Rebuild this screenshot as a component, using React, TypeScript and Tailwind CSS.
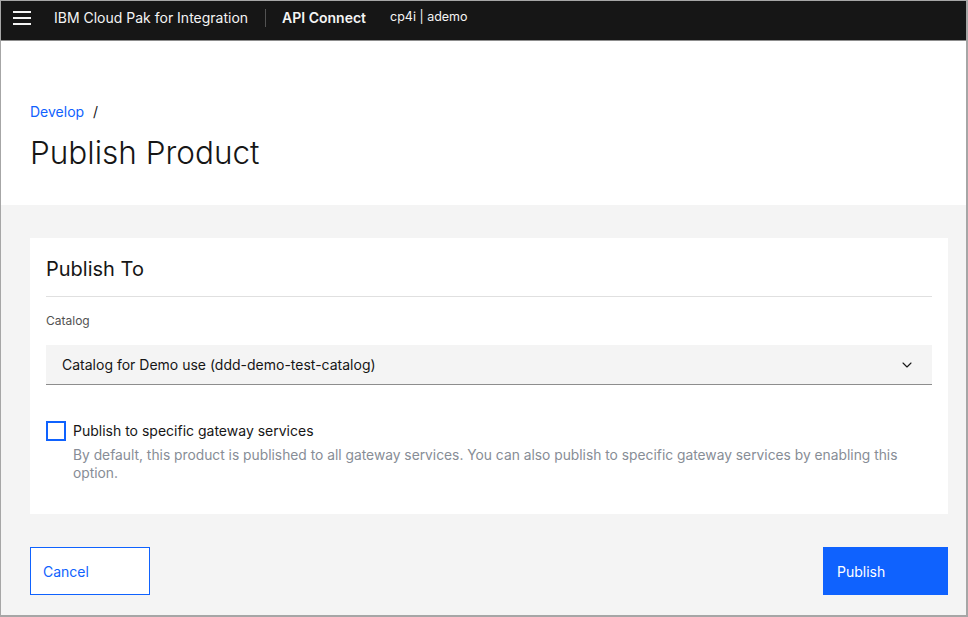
import { ChevronDown } from 'lucide-react';

const font = { fontFamily: 'Inter, "Noto Sans", sans-serif' };

export default function App() {
  return (
    <div
      className="w-[968px] h-[617px] border-l border-t border-r-2 border-b-2 border-[#a6a6a6] bg-[#f4f4f4] flex flex-col overflow-hidden"
      style={font}
    >
      <header className="h-[40px] bg-[#161616] border-b border-[#8d8d8d] flex items-center pb-[6px] text-[#f4f4f4] shrink-0">
        <div className="w-[40px] flex justify-center pl-[2px]">
          <svg width="18" height="14" viewBox="0 0 18 14" fill="#f4f4f4">
            <rect x="0" y="0" width="18" height="2" />
            <rect x="0" y="6" width="18" height="2" />
            <rect x="0" y="12" width="18" height="2" />
          </svg>
        </div>
        <span className="ml-[13px] text-[14px]">IBM Cloud Pak for Integration</span>
        <span className="ml-[17px] w-px h-[18px] bg-[#525252]" />
        <span className="ml-[16px] text-[14px] font-semibold">API Connect</span>
        <span className="ml-[24px] text-[12.5px]">cp4i | ademo</span>
      </header>

      <section className="bg-white h-[164px] shrink-0 pl-[29px] pt-[62px]">
        <div className="flex items-center text-[14px] leading-[18px]">
          <span className="text-[#0f62fe]">Develop</span>
          <span className="ml-[9px] text-[#161616]">/</span>
        </div>
        <h1 className="mt-[12px] text-[31.5px] leading-[40px] font-light text-[#161616]">Publish Product</h1>
      </section>

      <main className="flex-1 pl-[29px] pr-[18px] pt-[33px]">
        <div className="bg-white px-[16px] pt-[18px] pb-[32px]">
          <h2 className="text-[20px] leading-[26px] text-[#161616]">Publish To</h2>
          <div className="mt-[14px] h-px bg-[#e0e0e0]" />
          <div className="mt-[16px] text-[12px] leading-[16px] text-[#525252]">Catalog</div>
          <div className="mt-[16px] h-[40px] bg-[#f4f4f4] border-b border-[#8d8d8d] flex items-center justify-between pl-[16px] pr-[17px]">
            <span className="text-[14px] text-[#161616]">Catalog for Demo use (ddd-demo-test-catalog)</span>
            <ChevronDown size={16} strokeWidth={1.6} color="#161616" />
          </div>
          <div className="mt-[36px] flex items-start">
            <div className="w-[20px] h-[20px] border-2 border-[#0f62fe] bg-white shrink-0" />
            <div className="ml-[7px]">
              <div className="text-[14px] leading-[18px] text-[#161616] mt-[1px]">Publish to specific gateway services</div>
              <p className="mt-[6px] text-[13.8px] leading-[18px] text-[#878d96] pr-[30px]">
                By default, this product is published to all gateway services. You can also publish to specific gateway services by enabling this option.
              </p>
            </div>
          </div>
        </div>

        <div className="mt-[33px] flex justify-between">
          <button className="w-[120px] h-[48px] border border-[#0f62fe] bg-white text-[#0f62fe] text-[14px] text-left pl-[12px]">
            Cancel
          </button>
          <button className="w-[125px] h-[48px] bg-[#0f62fe] text-white text-[14px] text-left pl-[14px]">
            Publish
          </button>
        </div>
      </main>
    </div>
  );
}
